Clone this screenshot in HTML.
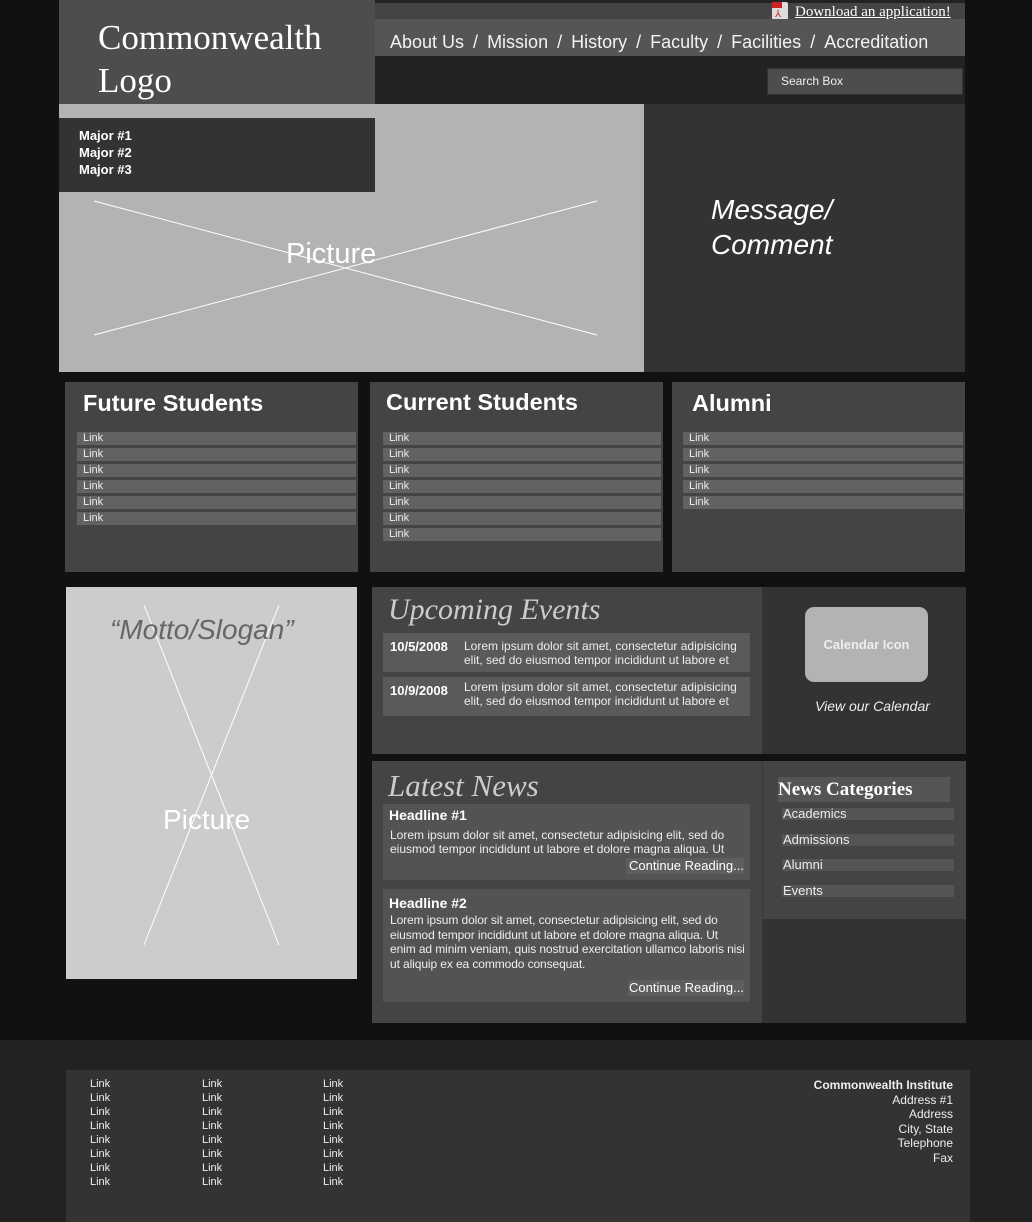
<!DOCTYPE html>
<html><head><style>
*{margin:0;padding:0;box-sizing:border-box}
body{width:1032px;height:1222px;background:#111;position:relative;overflow:hidden;font-family:"Liberation Sans",sans-serif;color:#fff}
.a{position:absolute}
.lk{position:absolute;height:13px;background:#626262;font-size:11px;line-height:12px;padding-left:6px;color:#eee}
.nav span{margin:0 9px}
.cat{position:absolute;left:20px;width:172px;height:12px;background:#555;font-size:13px;line-height:12px;padding-left:1px;color:#eee}
.fl{position:absolute;font-size:11px;line-height:14px;color:#eee}
</style></head><body>
<div class="a" style="left:375px;top:0;width:590px;height:104px;background:#222"></div>
<div class="a" style="left:375px;top:3px;width:590px;height:16px;background:#444"></div>
<div class="a" style="left:772px;top:2px;width:16px;height:18px;background:#ddd;border-radius:2px"><div style="position:absolute;left:0;top:0;width:10px;height:6px;background:#c22"></div><div style="position:absolute;left:3px;top:8px;color:#c22;font-size:10px;line-height:10px">⅄</div></div>
<div class="a" style="left:795px;top:4px;font-family:'Liberation Serif',serif;font-size:15px;text-decoration:underline;color:#fff">Download an application!</div>
<div class="a nav" style="left:375px;top:19px;width:590px;height:37px;background:#555;font-size:18px;line-height:46px;padding-left:15px;white-space:nowrap;color:#f2f2f2">About Us<span>/</span>Mission<span>/</span>History<span>/</span>Faculty<span>/</span>Facilities<span>/</span>Accreditation</div>
<div class="a" style="left:767px;top:68px;width:196px;height:27px;background:#4d4d4d;border:1px solid #333;font-size:12px;line-height:25px;padding-left:13px;color:#eee">Search Box</div>
<div class="a" style="left:59px;top:0;width:316px;height:118px;background:#4d4d4d;font-family:'Liberation Serif',serif;font-size:35px;line-height:43px;padding:16px 0 0 39px;color:#fff">Commonwealth<br>Logo</div>
<div class="a" style="left:59px;top:104px;width:585px;height:268px;background:#b3b3b3;overflow:hidden">
<svg width="585" height="268" style="position:absolute;left:0;top:0"><line x1="35" y1="97" x2="538" y2="231" stroke="#fff"/><line x1="35" y1="231" x2="538" y2="97" stroke="#fff"/></svg>
<div class="a" style="left:227px;top:134px;font-size:29px">Picture</div></div>
<div class="a" style="left:59px;top:118px;width:316px;height:74px;background:#333;font-size:13px;font-weight:bold;line-height:17px;padding:9px 0 0 20px">Major #1<br>Major #2<br>Major #3</div>
<div class="a" style="left:644px;top:104px;width:321px;height:268px;background:#333;font-size:28px;font-style:italic;line-height:35px;padding:88px 0 0 67px">Message/<br>Comment</div>

<div class="a" style="left:65px;top:382px;width:293px;height:190px;background:#444"><div class="a" style="left:18px;top:8px;font-size:23.5px;font-weight:bold">Future Students</div></div>
<div class="a" style="left:370px;top:382px;width:293px;height:190px;background:#444"><div class="a" style="left:16px;top:7px;font-size:23.5px;font-weight:bold">Current Students</div></div>
<div class="a" style="left:672px;top:382px;width:293px;height:190px;background:#444"><div class="a" style="left:20px;top:8px;font-size:23.5px;font-weight:bold">Alumni</div></div>
<div class="lk" style="left:77px;top:432px;width:279px">Link</div><div class="lk" style="left:77px;top:448px;width:279px">Link</div><div class="lk" style="left:77px;top:464px;width:279px">Link</div><div class="lk" style="left:77px;top:480px;width:279px">Link</div><div class="lk" style="left:77px;top:496px;width:279px">Link</div><div class="lk" style="left:77px;top:512px;width:279px">Link</div>
<div class="lk" style="left:383px;top:432px;width:278px">Link</div><div class="lk" style="left:383px;top:448px;width:278px">Link</div><div class="lk" style="left:383px;top:464px;width:278px">Link</div><div class="lk" style="left:383px;top:480px;width:278px">Link</div><div class="lk" style="left:383px;top:496px;width:278px">Link</div><div class="lk" style="left:383px;top:512px;width:278px">Link</div><div class="lk" style="left:383px;top:528px;width:278px">Link</div>
<div class="lk" style="left:683px;top:432px;width:280px">Link</div><div class="lk" style="left:683px;top:448px;width:280px">Link</div><div class="lk" style="left:683px;top:464px;width:280px">Link</div><div class="lk" style="left:683px;top:480px;width:280px">Link</div><div class="lk" style="left:683px;top:496px;width:280px">Link</div>

<div class="a" style="left:66px;top:587px;width:291px;height:392px;background:#ccc;overflow:hidden">
<svg width="291" height="392" style="position:absolute;left:0;top:0"><line x1="78" y1="18" x2="213" y2="358" stroke="#fff"/><line x1="78" y1="358" x2="213" y2="18" stroke="#fff"/></svg>
<div class="a" style="left:44px;top:27px;font-size:28px;font-style:italic;color:#666">“Motto/Slogan”</div>
<div class="a" style="left:97px;top:217px;font-size:28px">Picture</div></div>

<div class="a" style="left:372px;top:587px;width:390px;height:167px;background:#444">
<div class="a" style="left:16px;top:6px;font-family:'Liberation Serif',serif;font-style:italic;font-size:30px;color:#ccc">Upcoming Events</div>
<div class="a" style="left:11px;top:46px;width:367px;height:39px;background:#5a5a5a"></div>
<div class="a" style="left:11px;top:90px;width:367px;height:39px;background:#5a5a5a"></div>
<div class="a" style="left:18px;top:52px;font-size:13px;font-weight:bold">10/5/2008</div>
<div class="a" style="left:92px;top:52px;font-size:12px;line-height:14px;color:#eee">Lorem ipsum dolor sit amet, consectetur adipisicing<br>elit, sed do eiusmod tempor incididunt ut labore et</div>
<div class="a" style="left:18px;top:96px;font-size:13px;font-weight:bold">10/9/2008</div>
<div class="a" style="left:92px;top:93px;font-size:12px;line-height:14px;color:#eee">Lorem ipsum dolor sit amet, consectetur adipisicing<br>elit, sed do eiusmod tempor incididunt ut labore et</div>
</div>
<div class="a" style="left:762px;top:587px;width:204px;height:167px;background:#333">
<div class="a" style="left:43px;top:20px;width:123px;height:75px;background:#b3b3b3;border-radius:9px;font-size:13px;font-weight:bold;text-align:center;line-height:75px;color:#eee">Calendar Icon</div>
<div class="a" style="left:53px;top:111px;font-size:14px;font-style:italic;color:#eee">View our Calendar</div></div>

<div class="a" style="left:372px;top:761px;width:390px;height:262px;background:#444">
<div class="a" style="left:16px;top:7px;font-family:'Liberation Serif',serif;font-style:italic;font-size:31px;color:#ccc">Latest News</div>
<div class="a" style="left:11px;top:43px;width:367px;height:76px;background:#535353"></div>
<div class="a" style="left:17px;top:46px;font-size:14px;font-weight:bold">Headline #1</div>
<div class="a" style="left:18px;top:67px;font-size:12px;line-height:14px;color:#eee">Lorem ipsum dolor sit amet, consectetur adipisicing elit, sed do<br>eiusmod tempor incididunt ut labore et dolore magna aliqua. Ut</div>
<div class="a" style="left:254px;top:97px;width:118px;height:16px;background:#5e5e5e;font-size:13px;line-height:16px;padding-left:3px">Continue Reading...</div>
<div class="a" style="left:11px;top:128px;width:367px;height:113px;background:#535353"></div>
<div class="a" style="left:17px;top:134px;font-size:14px;font-weight:bold">Headline #2</div>
<div class="a" style="left:18px;top:152px;font-size:12px;line-height:14.5px;color:#eee;white-space:nowrap;letter-spacing:-0.1px">Lorem ipsum dolor sit amet, consectetur adipisicing elit, sed do<br>eiusmod tempor incididunt ut labore et dolore magna aliqua. Ut<br>enim ad minim veniam, quis nostrud exercitation ullamco laboris nisi<br>ut aliquip ex ea commodo consequat.</div>
<div class="a" style="left:256px;top:219px;width:116px;height:16px;background:#5e5e5e;font-size:13px;line-height:16px;padding-left:1px">Continue Reading...</div>
</div>
<div class="a" style="left:762px;top:761px;width:204px;height:262px;background:#333">
<div class="a" style="left:0;top:0;width:204px;height:158px;background:#444;border-left:1px solid #3a3a3a"></div>
<div class="a" style="left:16px;top:16px;width:172px;height:25px;background:#555;font-family:'Liberation Serif',serif;font-weight:bold;font-size:19px;line-height:26px;white-space:nowrap">News Categories</div>
<div class="cat" style="top:47px">Academics</div><div class="cat" style="top:73px">Admissions</div><div class="cat" style="top:98px">Alumni</div><div class="cat" style="top:124px">Events</div>
</div>

<div class="a" style="left:0;top:1040px;width:1032px;height:182px;background:#222"></div>
<div class="a" style="left:66px;top:1070px;width:904px;height:152px;background:#333">
<div class="fl" style="left:24px;top:7px">Link<br>Link<br>Link<br>Link<br>Link<br>Link<br>Link<br>Link</div>
<div class="fl" style="left:136px;top:7px">Link<br>Link<br>Link<br>Link<br>Link<br>Link<br>Link<br>Link</div>
<div class="fl" style="left:257px;top:7px">Link<br>Link<br>Link<br>Link<br>Link<br>Link<br>Link<br>Link</div>
<div class="fl" style="right:17px;top:8px;text-align:right;line-height:14.5px;font-size:12px"><b>Commonwealth Institute</b><br>Address #1<br>Address<br>City, State<br>Telephone<br>Fax</div>
</div>
</body></html>
